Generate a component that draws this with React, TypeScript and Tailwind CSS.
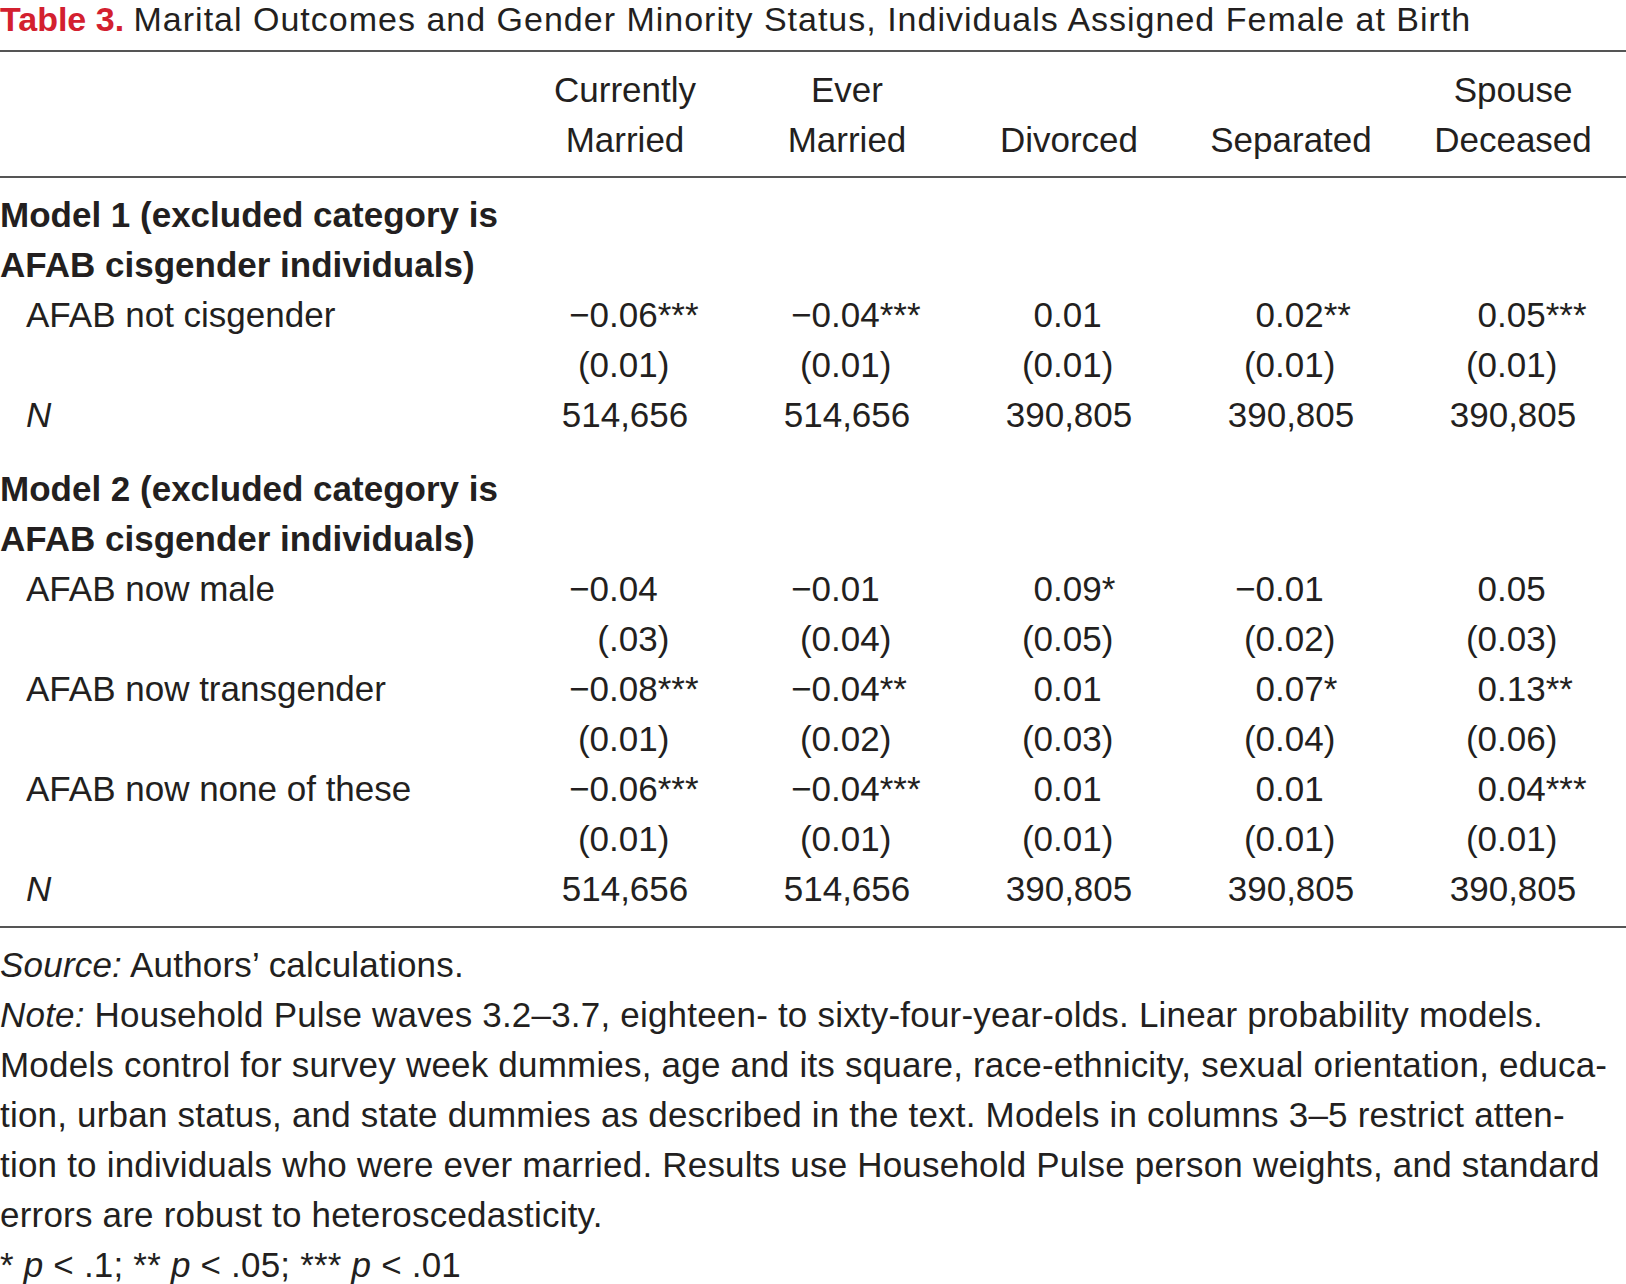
import React from "react";

type RowKind = "heading" | "coef" | "se" | "n";

const COLS = "grid grid-cols-[514px_repeat(5,222px)]";

function Val({ v }: { v: string }) {
  const i = v.indexOf(".");
  const left = i >= 0 ? v.slice(0, i) : v;
  const right = i >= 0 ? v.slice(i) : "";
  return (
    <div className="flex whitespace-nowrap">
      <span className="w-[95px] shrink-0 text-right">{left}</span>
      <span>{right}</span>
    </div>
  );
}

function Row({
  label,
  kind,
  values,
}: {
  label?: React.ReactNode;
  kind: RowKind;
  values?: string[];
}) {
  return (
    <div className={`${COLS} h-[50px]`}>
      <div
        className={
          kind === "heading"
            ? "font-bold whitespace-nowrap"
            : kind === "n"
            ? "pl-[26px] italic"
            : "pl-[26px] whitespace-nowrap"
        }
      >
        {label}
      </div>
      {values &&
        values.map((v, i) =>
          kind === "n" ? (
            <div key={i} className="text-center whitespace-nowrap">
              {v}
            </div>
          ) : (
            <Val key={i} v={v} />
          )
        )}
    </div>
  );
}

const N1 = ["514,656", "514,656", "390,805", "390,805", "390,805"];

export default function App() {
  return (
    <div className="w-[1626px] h-[1284px] overflow-hidden bg-white text-[#231f20] font-['Liberation_Sans',Arial,sans-serif] text-[35px] leading-[50px]">
      {/* Title */}
      <div className="text-[34px] leading-[38px] pb-[12px] whitespace-nowrap">
        <span className="font-bold text-[#d3202f]">Table 3.</span>{" "}
        <span className="tracking-[1px]">
          Marital Outcomes and Gender Minority Status, Individuals Assigned
          Female at Birth
        </span>
      </div>

      {/* Header */}
      <div
        className={`${COLS} border-t-2 border-b-2 border-[#555] pt-[13px] pb-[11px] text-center`}
      >
        <div />
        <div>
          <div className="h-[50px]">Currently</div>
          <div className="h-[50px]">Married</div>
        </div>
        <div>
          <div className="h-[50px]">Ever</div>
          <div className="h-[50px]">Married</div>
        </div>
        <div>
          <div className="h-[50px]" />
          <div className="h-[50px]">Divorced</div>
        </div>
        <div>
          <div className="h-[50px]" />
          <div className="h-[50px]">Separated</div>
        </div>
        <div>
          <div className="h-[50px]">Spouse</div>
          <div className="h-[50px]">Deceased</div>
        </div>
      </div>

      {/* Body */}
      <div className="pt-[12px] pb-[12px] border-b-2 border-[#555]">
        <Row kind="heading" label="Model 1 (excluded category is" />
        <Row kind="heading" label="AFAB cisgender individuals)" />
        <Row
          kind="coef"
          label="AFAB not cisgender"
          values={["−0.06***", "−0.04***", "0.01", "0.02**", "0.05***"]}
        />
        <Row
          kind="se"
          values={["(0.01)", "(0.01)", "(0.01)", "(0.01)", "(0.01)"]}
        />
        <Row kind="n" label="N" values={N1} />

        <div className="h-[24px]" />

        <Row kind="heading" label="Model 2 (excluded category is" />
        <Row kind="heading" label="AFAB cisgender individuals)" />
        <Row
          kind="coef"
          label="AFAB now male"
          values={["−0.04", "−0.01", "0.09*", "−0.01", "0.05"]}
        />
        <Row
          kind="se"
          values={["(.03)", "(0.04)", "(0.05)", "(0.02)", "(0.03)"]}
        />
        <Row
          kind="coef"
          label="AFAB now transgender"
          values={["−0.08***", "−0.04**", "0.01", "0.07*", "0.13**"]}
        />
        <Row
          kind="se"
          values={["(0.01)", "(0.02)", "(0.03)", "(0.04)", "(0.06)"]}
        />
        <Row
          kind="coef"
          label="AFAB now none of these"
          values={["−0.06***", "−0.04***", "0.01", "0.01", "0.04***"]}
        />
        <Row
          kind="se"
          values={["(0.01)", "(0.01)", "(0.01)", "(0.01)", "(0.01)"]}
        />
        <Row kind="n" label="N" values={N1} />
      </div>

      {/* Footer notes */}
      <div className="pt-[12px] whitespace-nowrap tracking-[0.2px]">
        <div>
          <i>Source:</i> Authors’ calculations.
        </div>
        <div>
          <i>Note:</i> Household Pulse waves 3.2–3.7, eighteen- to
          sixty-four-year-olds. Linear probability models.
        </div>
        <div>
          Models control for survey week dummies, age and its square,
          race-ethnicity, sexual orientation, educa-
        </div>
        <div>
          tion, urban status, and state dummies as described in the text.
          Models in columns 3–5 restrict atten-
        </div>
        <div>
          tion to individuals who were ever married. Results use Household
          Pulse person weights, and standard
        </div>
        <div>errors are robust to heteroscedasticity.</div>
        <div>
          * <i>p</i> &lt; .1; ** <i>p</i> &lt; .05; *** <i>p</i> &lt; .01
        </div>
      </div>
    </div>
  );
}
